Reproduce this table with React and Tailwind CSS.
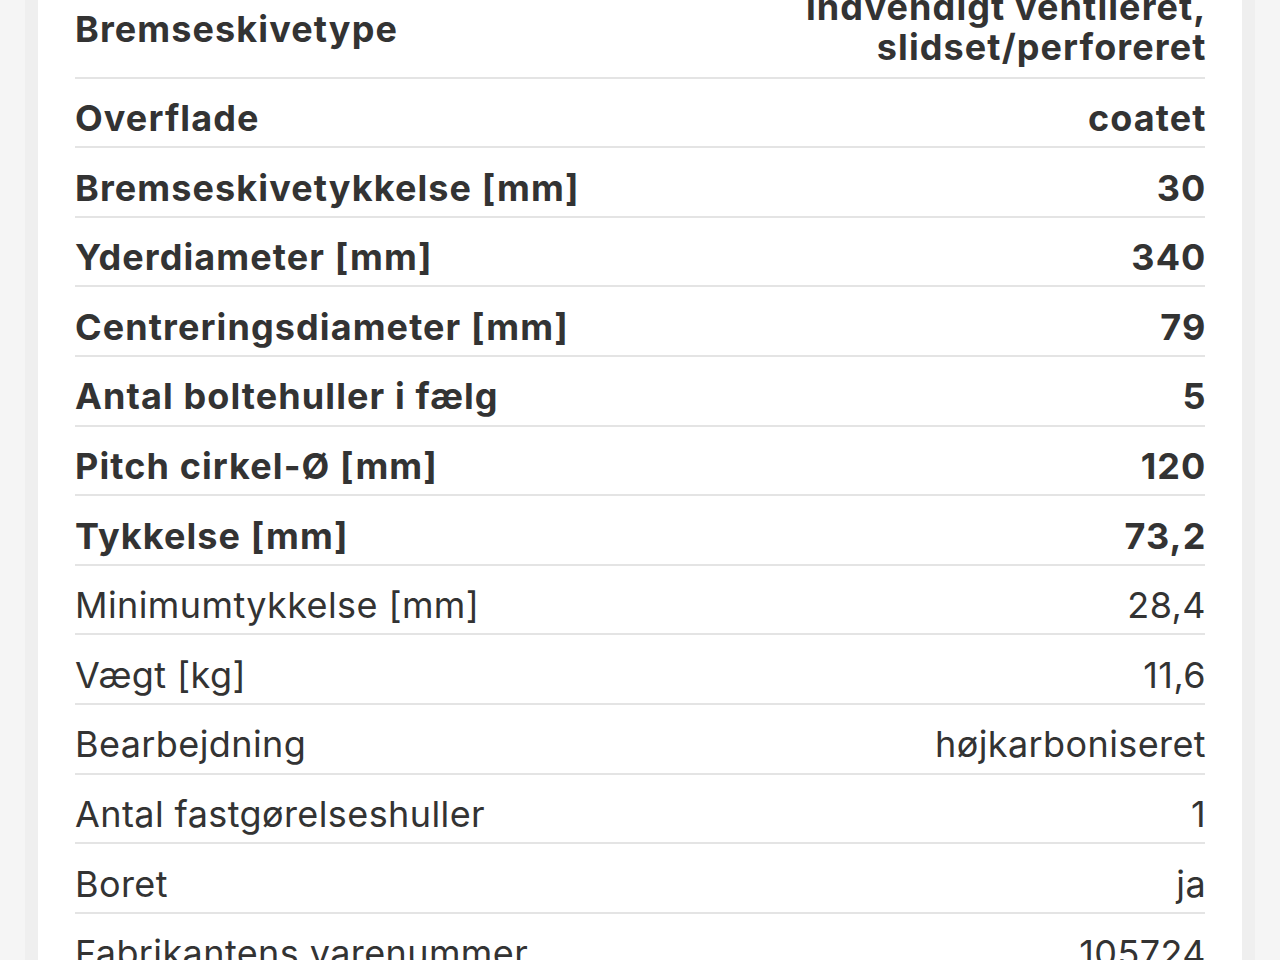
import React from 'react';

const rows = [
    { label: 'Bremseskivetype', value: ['indvendigt ventileret,', 'slidset/perforeret'], bold: true },
    { label: 'Overflade', value: 'coatet', bold: true },
    { label: 'Bremseskivetykkelse [mm]', value: '30', bold: true },
    { label: 'Yderdiameter [mm]', value: '340', bold: true },
    { label: 'Centreringsdiameter [mm]', value: '79', bold: true },
    { label: 'Antal boltehuller i fælg', value: '5', bold: true },
    { label: 'Pitch cirkel-Ø [mm]', value: '120', bold: true },
    { label: 'Tykkelse [mm]', value: '73,2', bold: true },
    { label: 'Minimumtykkelse [mm]', value: '28,4' },
    { label: 'Vægt [kg]', value: '11,6' },
    { label: 'Bearbejdning', value: 'højkarboniseret' },
    { label: 'Antal fastgørelseshuller', value: '1' },
    { label: 'Boret', value: 'ja' },
    { label: 'Fabrikantens varenummer', value: '105724' },
];

function SpecRow({ label, value, bold }) {
    const weight = bold ? 'font-bold tracking-[1.1px]' : 'font-normal tracking-[0.4px]';
    return (
        <div className={`flex items-center justify-between gap-8 pt-[19.5px] pb-[8.1px] border-b-2 border-[#e4e4e4] ${weight}`}>
            <span>{label}</span>
            <span className={`text-right ${bold ? '-mr-[1.5px]' : '-mr-[1px]'}`}>
                {Array.isArray(value)
                    ? value.map(v => <div key={v} className="-mt-[2px] mb-[2px]">{v}</div>)
                    : value}
            </span>
        </div>
    );
}

export default function App() {
    return (
        <div className="h-[960px] overflow-hidden bg-[#f5f5f5] px-[25px]">
            <div className="flow-root h-full border-x-[13px] border-[#efefef] bg-white px-[37px]">
                <div
                    className="-mt-[31px] text-[36px] leading-[40px] text-[#333333]"
                    style={{ fontFamily: 'Inter, "Noto Sans", sans-serif' }}
                >
                    {rows.map(r => <SpecRow key={r.label} {...r} />)}
                </div>
            </div>
        </div>
    );
}
